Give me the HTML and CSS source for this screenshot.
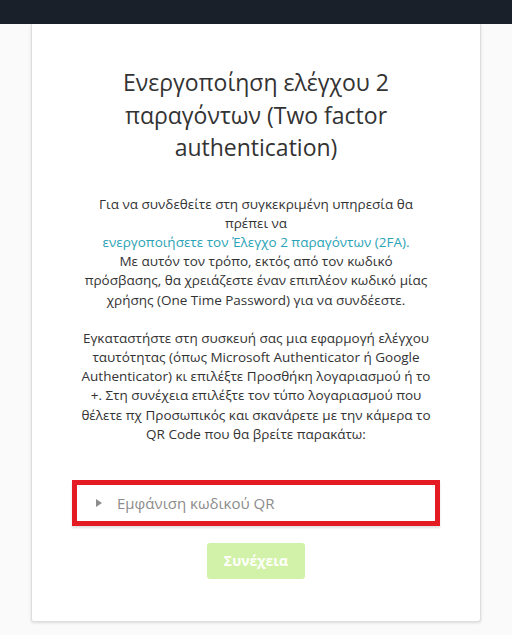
FILE: index.html
```html
<!DOCTYPE html>
<html lang="el">
<head>
<meta charset="utf-8">
<title>Two factor authentication</title>
<link rel="stylesheet" href="styles.css">
</head>
<body>
<div class="topbar"></div>
<main class="page">
  <section class="card">
    <h1 class="title">Ενεργοποίηση ελέγχου 2<br>παραγόντων (Two factor<br>authentication)</h1>
    <p class="text">Για να συνδεθείτε στη συγκεκριμένη υπηρεσία θα<br>πρέπει να<br><a class="link" href="#">ενεργοποιήσετε τον Έλεγχο 2 παραγόντων (2FA).</a><br>Με αυτόν τον τρόπο, εκτός από τον κωδικό<br>πρόσβασης, θα χρειάζεστε έναν επιπλέον κωδικό μίας<br>χρήσης (One Time Password) για να συνδέεστε.</p>
    <p class="text">Εγκαταστήστε στη συσκευή σας μια εφαρμογή ελέγχου<br>ταυτότητας (όπως Microsoft Authenticator ή Google<br>Authenticator) κι επιλέξτε Προσθήκη λογαριασμού ή το<br>+. Στη συνέχεια επιλέξτε τον τύπο λογαριασμού που<br>θέλετε πχ Προσωπικός και σκανάρετε με την κάμερα το<br>QR Code που θα βρείτε παρακάτω:</p>
    <details class="qr">
      <summary class="qr-summary"><span class="qr-arrow"></span><span class="qr-label">Εμφάνιση κωδικού QR</span></summary>
    </details>
    <div class="actions">
      <button class="btn" type="button" disabled>Συνέχεια</button>
    </div>
  </section>
</main>
</body>
</html>
```

FILE: styles.css
```css
html, body {
  margin: 0;
  padding: 0;
  background: #ffffff;
}
body {
  font-family: "Open Sans", "DejaVu Sans", sans-serif;
  color: #333333;
  width: 514px;
  height: 635px;
  overflow: hidden;
}
.topbar {
  height: 24px;
  width: 512px;
  background: #1a202a;
}
.page {
  width: 512px;
  height: 611px;
  background: #fafafa;
  display: flex;
  justify-content: center;
  align-items: flex-start;
}
.card {
  box-sizing: border-box;
  width: 450px;
  height: 598px;
  background: #ffffff;
  border: 1px solid #dedede;
  border-top: none;
  border-radius: 0 0 3px 3px;
  box-shadow: 0 1px 3px rgba(0, 0, 0, 0.12);
  padding: 42px 38px 0 38px;
  display: flex;
  flex-direction: column;
  align-items: stretch;
}
.title {
  margin: 0;
  font-size: 23px;
  font-weight: 400;
  line-height: 32.5px;
  text-align: center;
  color: #333333;
}
.text {
  margin: 31px 0 0 0;
  font-size: 13.5px;
  line-height: 19.2px;
  text-align: center;
  white-space: nowrap;
  color: #333333;
}
.text + .text {
  margin-top: 19px;
}
.link {
  color: #2aa3b6;
  text-decoration: none;
}
.qr {
  margin: 36px 2px 0 2px;
  box-sizing: border-box;
  height: 46px;
  border: 5px solid #e51b24;
  background: #ffffff;
  box-shadow: 0 2px 2px rgba(0, 0, 0, 0.12);
}
.qr-summary {
  list-style: none;
  display: flex;
  align-items: center;
  height: 36px;
  padding-left: 19px;
  font-size: 15px;
  color: #8c8c8c;
  cursor: pointer;
}
.qr-summary::-webkit-details-marker {
  display: none;
}
.qr-arrow {
  flex: none;
  width: 0;
  height: 0;
  border-top: 4.5px solid transparent;
  border-bottom: 4.5px solid transparent;
  border-left: 6px solid #8c8c8c;
}
.qr-label {
  margin-left: 15px;
}
.actions {
  display: flex;
  justify-content: center;
  margin-top: 17px;
}
.btn {
  width: 98px;
  height: 36px;
  border: none;
  border-radius: 3px;
  background: #d3f2a9;
  color: #ffffff;
  font-family: "Open Sans", "DejaVu Sans", sans-serif;
  font-weight: 700;
  font-size: 14px;
  padding: 0;
}
```
